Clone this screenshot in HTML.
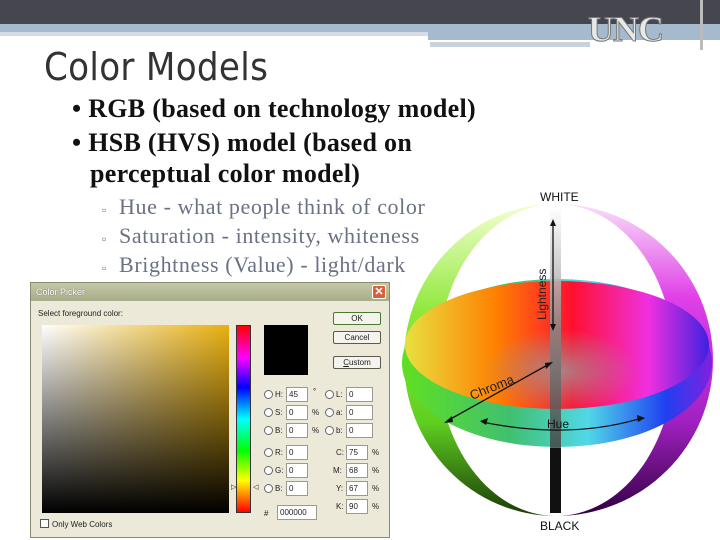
<!DOCTYPE html>
<html><head><style>
*{margin:0;padding:0;box-sizing:border-box}
body{width:720px;height:540px;overflow:hidden;background:#fff;position:relative;font-family:"Liberation Sans",sans-serif}
.a{position:absolute}
.serif{font-family:"Liberation Serif",serif}
.b1{font-size:26px;color:#111;font-weight:bold;letter-spacing:0.3px;white-space:nowrap}
.b2{font-size:22px;color:#6b7184;white-space:nowrap;letter-spacing:0.6px}
.dlg{font-size:8px;color:#222}
.inp{position:absolute;background:#fff;border:1px solid #9a9a90;font-size:8px;padding-left:2px;height:15px;line-height:13px}
.rad{position:absolute;width:9px;height:9px;border:1px solid #666;border-radius:50%;background:#fff}
.lbl{position:absolute;font-size:8px}
.btn{position:absolute;width:48px;height:13px;border:1px solid #5b5b4d;border-radius:2px;background:#f4f3ee;font-size:8px;text-align:center;line-height:11px}
</style></head><body>
<div class="a" style="left:0;top:0;width:720px;height:24px;background:#46464f"></div>
<div class="a" style="left:0;top:24px;width:720px;height:8px;background:#a6bacd"></div>
<div class="a" style="left:0;top:32px;width:430px;height:4px;background:#d4dde6"></div>
<div class="a" style="left:428px;top:32px;width:292px;height:8px;background:#a6bacd"></div>
<div class="a" style="left:430px;top:42px;width:160px;height:5px;background:#c9d3dd"></div>
<div class="a" style="left:700px;top:0;width:3px;height:50px;background:#bbb"></div>
<div class="a serif" style="left:588px;top:8px;font-size:36px;font-weight:bold;color:#e8e8e8;-webkit-text-stroke:1px #777;letter-spacing:-1px">UNC</div>
<div class="a" style="left:44px;top:45px;font-size:38px;color:#333;font-family:'DejaVu Sans Condensed','Liberation Sans Narrow',sans-serif;letter-spacing:0.3px">Color Models</div>

<div class="a serif b1" style="left:72px;top:94px">•&nbsp;RGB (based on technology model)</div>
<div class="a serif b1" style="left:72px;top:128px">•&nbsp;HSB (HVS) model (based on</div>
<div class="a serif b1" style="left:90px;top:159px">perceptual color model)</div>
<div class="a serif b2" style="left:102px;top:194px"><span style="font-size:12px">▫</span>&nbsp; Hue - what people think of color</div>
<div class="a serif b2" style="left:102px;top:223px"><span style="font-size:12px">▫</span>&nbsp; Saturation - intensity, whiteness</div>
<div class="a serif b2" style="left:102px;top:252px"><span style="font-size:12px">▫</span>&nbsp; Brightness (Value) - light/dark</div>

<svg class="a" style="left:395px;top:180px" width="325" height="360" viewBox="395 180 325 360">
<defs>
<linearGradient id="gl" x1="0" y1="0" x2="0" y2="1"><stop offset="0" stop-color="#f4ffd0"/><stop offset=".35" stop-color="#8ee83a"/><stop offset=".7" stop-color="#5fcf20"/><stop offset="1" stop-color="#1a3a08"/></linearGradient>
<linearGradient id="gr" x1="0" y1="0" x2="0" y2="1"><stop offset="0" stop-color="#f8e0f8"/><stop offset=".3" stop-color="#e040e8"/><stop offset=".7" stop-color="#a020c0"/><stop offset="1" stop-color="#300040"/></linearGradient>
<linearGradient id="ax" x1="0" y1="0" x2="0" y2="1"><stop offset="0" stop-color="#fff"/><stop offset=".5" stop-color="#888"/><stop offset="1" stop-color="#444"/></linearGradient>
<linearGradient id="dh" x1="0" y1="0" x2="1" y2="0"><stop offset="0" stop-color="#e8e040"/><stop offset=".3" stop-color="#ff8000"/><stop offset=".55" stop-color="#ff1030"/><stop offset=".8" stop-color="#f030e0"/><stop offset="1" stop-color="#4020e0"/></linearGradient>
<linearGradient id="dl" x1="0" y1="0" x2="1" y2="0"><stop offset="0" stop-color="#60e020"/><stop offset=".35" stop-color="#40c070"/><stop offset=".6" stop-color="#50d8e8"/><stop offset=".85" stop-color="#2040f0"/><stop offset="1" stop-color="#8020e0"/></linearGradient>
<radialGradient id="cen" cx=".5" cy=".55" r=".35"><stop offset="0" stop-color="#999" stop-opacity=".8"/><stop offset="1" stop-color="#999" stop-opacity="0"/></radialGradient>
</defs>
<path d="M556,204 A152,156 0 0 0 556,516 A118,156 0 0 1 556,204Z" fill="url(#gl)"/>
<path d="M556,204 A157,156 0 0 1 556,516 A118,156 0 0 0 556,204Z" fill="url(#gr)"/>
<ellipse cx="557" cy="363" rx="155" ry="84" fill="url(#dl)"/>
<ellipse cx="557" cy="345" rx="152" ry="64" fill="url(#dh)"/>
<ellipse cx="560" cy="365" rx="110" ry="60" fill="url(#cen)"/>
<rect x="550" y="208" width="11" height="240" fill="url(#ax)" opacity=".85"/>
<rect x="550" y="448" width="11" height="65" fill="#111"/>
<g stroke="#111" stroke-width="1.3" fill="#111">
<line x1="553" y1="222" x2="553" y2="328"/><path d="M550,226 L553,219 L556,226Z M550,324 L553,331 L556,324Z" stroke="none"/>
<line x1="447" y1="421" x2="551" y2="363"/><path d="M444,423 L452,416 L453,422Z M553,362 L546,369 L545,363Z" stroke="none"/>
<path d="M482,422 Q570,440 642,418" fill="none"/><path d="M480,421 L488,418 L486,425Z M645,418 L637,415 L638,422Z" stroke="none"/>
</g>
<text x="540" y="201" font-family="Liberation Sans" font-size="12" fill="#111">WHITE</text>
<text x="540" y="530" font-family="Liberation Sans" font-size="12" fill="#111">BLACK</text>
<text x="547" y="428" font-family="Liberation Sans" font-size="12" fill="#111">Hue</text>
<text transform="translate(546,320) rotate(-90)" font-family="Liberation Sans" font-size="12" fill="#222">Lightness</text>
<text transform="translate(472,400) rotate(-22)" font-family="Liberation Sans" font-size="13" fill="#222">Chroma</text>
</svg>

<div class="a dlg" style="left:30px;top:282px;width:360px;height:256px;background:#ece9d8;border:1px solid #8a8a70">
<div class="a" style="left:0;top:0;width:358px;height:18px;background:linear-gradient(#c4c8a8,#a8ad8a);color:#fff;font-size:9px;line-height:18px;padding-left:5px;text-shadow:0 0 1px #555">Color Picker</div>
<div class="a" style="left:341px;top:2px;width:14px;height:14px;background:#d8603a;border:1px solid #fff;border-radius:2px;color:#fff;font-size:11px;line-height:12px;text-align:center;font-weight:bold">✕</div>
<div class="lbl" style="left:7px;top:26px">Select foreground color:</div>
<div class="a" style="left:11px;top:42px;width:187px;height:188px;background:linear-gradient(to bottom,rgba(0,0,0,0),#000),linear-gradient(to right,#fff,#e8b010)"></div>
<div class="a" style="left:205px;top:42px;width:15px;height:188px;border:1px solid #333;background:linear-gradient(#f00,#f0f 17%,#00f 33%,#0ff 50%,#0f0 67%,#ff0 83%,#f00)"></div>
<div class="lbl" style="left:200px;top:200px;font-size:7px">▷</div>
<div class="lbl" style="left:222px;top:200px;font-size:7px">◁</div>
<div class="a" style="left:233px;top:42px;width:44px;height:50px;background:#000"></div>
<div class="btn" style="left:302px;top:29px;border-color:#4a7a30">OK</div>
<div class="btn" style="left:302px;top:48px">Cancel</div>
<div class="btn" style="left:302px;top:73px"><u>C</u>ustom</div>
<div class="rad" style="left:233px;top:107px"></div><div class="lbl" style="left:244px;top:107px">H:</div><div class="inp" style="left:255px;top:104px;width:22px">45</div><div class="lbl" style="left:282px;top:104px">°</div>
<div class="rad" style="left:233px;top:125px"></div><div class="lbl" style="left:244px;top:125px">S:</div><div class="inp" style="left:255px;top:122px;width:22px">0</div><div class="lbl" style="left:281px;top:125px">%</div>
<div class="rad" style="left:233px;top:143px"></div><div class="lbl" style="left:244px;top:143px">B:</div><div class="inp" style="left:255px;top:140px;width:22px">0</div><div class="lbl" style="left:281px;top:143px">%</div>
<div class="rad" style="left:233px;top:165px"></div><div class="lbl" style="left:244px;top:165px">R:</div><div class="inp" style="left:255px;top:162px;width:22px">0</div>
<div class="rad" style="left:233px;top:183px"></div><div class="lbl" style="left:244px;top:183px">G:</div><div class="inp" style="left:255px;top:180px;width:22px">0</div>
<div class="rad" style="left:233px;top:201px"></div><div class="lbl" style="left:244px;top:201px">B:</div><div class="inp" style="left:255px;top:198px;width:22px">0</div>
<div class="rad" style="left:294px;top:107px"></div><div class="lbl" style="left:305px;top:107px">L:</div><div class="inp" style="left:315px;top:104px;width:27px">0</div>
<div class="rad" style="left:294px;top:125px"></div><div class="lbl" style="left:305px;top:125px">a:</div><div class="inp" style="left:315px;top:122px;width:27px">0</div>
<div class="rad" style="left:294px;top:143px"></div><div class="lbl" style="left:305px;top:143px">b:</div><div class="inp" style="left:315px;top:140px;width:27px">0</div>
<div class="lbl" style="left:305px;top:165px">C:</div><div class="inp" style="left:315px;top:162px;width:22px">75</div><div class="lbl" style="left:341px;top:165px">%</div>
<div class="lbl" style="left:302px;top:183px">M:</div><div class="inp" style="left:315px;top:180px;width:22px">68</div><div class="lbl" style="left:341px;top:183px">%</div>
<div class="lbl" style="left:305px;top:201px">Y:</div><div class="inp" style="left:315px;top:198px;width:22px">67</div><div class="lbl" style="left:341px;top:201px">%</div>
<div class="lbl" style="left:305px;top:219px">K:</div><div class="inp" style="left:315px;top:216px;width:22px">90</div><div class="lbl" style="left:341px;top:219px">%</div>
<div class="lbl" style="left:233px;top:226px">#</div><div class="inp" style="left:246px;top:222px;width:40px">000000</div>
<div class="a" style="left:9px;top:236px;width:9px;height:9px;border:1px solid #555;background:#fff"></div>
<div class="lbl" style="left:21px;top:237px">Only Web Colors</div>
</div>
</body></html>
